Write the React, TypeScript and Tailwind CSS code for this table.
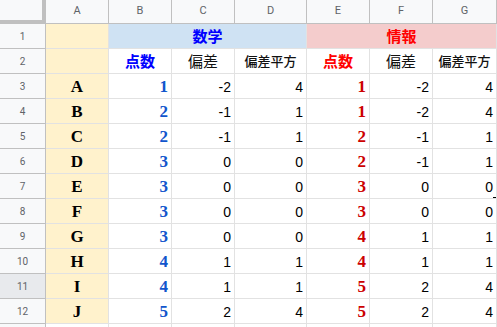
import React from 'react';

type Row = [string, number, number, number, number, number, number];

const rows: Row[] = [
  ['A', 1, -2, 4, 1, -2, 4],
  ['B', 2, -1, 1, 1, -2, 4],
  ['C', 2, -1, 1, 2, -1, 1],
  ['D', 3, 0, 0, 2, -1, 1],
  ['E', 3, 0, 0, 3, 0, 0],
  ['F', 3, 0, 0, 3, 0, 0],
  ['G', 3, 0, 0, 4, 1, 1],
  ['H', 4, 1, 1, 4, 1, 1],
  ['I', 4, 1, 1, 5, 2, 4],
  ['J', 5, 2, 4, 5, 2, 4],
];

const colHead =
  'flex items-center justify-center bg-[#f8f9fa] border-r border-b border-[#c0c0c0] text-[11px] text-[#5f6368] font-["Roboto",sans-serif]';
const rowHead =
  'flex items-center justify-center border-r border-b border-[#c0c0c0] text-[10px] text-[#5f6368] font-["Roboto",sans-serif]';
const cell = 'flex items-center border-r border-b border-[#e2e2e2] overflow-hidden';
const jp = 'font-["Noto_Sans_CJK_JP",sans-serif]';
const plain = `${cell} justify-end pr-[3px] pt-[2px] text-[14px] text-black font-["Liberation_Sans",Arial,sans-serif]`;
const serifNum = 'justify-end pr-[3px] pt-[2px] text-[17px] font-bold font-["Liberation_Serif",serif]';

export default function App() {
  return (
    <div className="w-[497px] h-[327px] overflow-hidden bg-white">
      <div className="grid grid-cols-[46px_63px_63px_63px_72px_63px_63px_64px] grid-rows-[24px_repeat(12,25px)_25px]">
        {/* column headers */}
        <div className="bg-[#f8f9fa] border-r-4 border-b-4 border-[#c0c0c0]" />
        {['A', 'B', 'C', 'D', 'E', 'F', 'G'].map(c => (
          <div key={c} className={colHead}>
            {c}
          </div>
        ))}

        {/* row 1 */}
        <div className={`${rowHead} bg-[#f8f9fa]`}>1</div>
        <div className={`${cell} bg-[#fff2cc]`} />
        <div className={`${cell} col-span-3 justify-center bg-[#cfe2f3] text-[15px] font-bold text-[#0000ff] ${jp}`}>
          数学
        </div>
        <div className={`${cell} col-span-3 justify-center bg-[#f4cccc] text-[15px] font-bold text-[#ff0000] ${jp}`}>
          情報
        </div>

        {/* row 2 */}
        <div className={`${rowHead} bg-[#f8f9fa]`}>2</div>
        <div className={`${cell} bg-[#fff2cc]`} />
        <div className={`${cell} justify-center text-[15px] font-bold text-[#0000ff] ${jp}`}>点数</div>
        <div className={`${cell} justify-center text-[15px] text-[#111] ${jp}`}>偏差</div>
        <div className={`${cell} justify-center text-[13px] font-medium text-[#111] ${jp}`}>偏差平方</div>
        <div className={`${cell} justify-center text-[15px] font-bold text-[#ff0000] ${jp}`}>点数</div>
        <div className={`${cell} justify-center text-[15px] text-[#111] ${jp}`}>偏差</div>
        <div className={`${cell} justify-center text-[13px] font-medium text-[#111] ${jp}`}>偏差平方</div>

        {/* data */}
        {rows.map(([name, a, b, c, d, e, f], i) => (
          <React.Fragment key={name}>
            <div className={`${rowHead} ${i === 8 ? 'bg-[#e8eaed]' : 'bg-[#f8f9fa]'}`}>{i + 3}</div>
            <div className={`${cell} justify-center pt-[2px] bg-[#fff2cc] text-[17px] font-bold text-black font-["Liberation_Serif",serif]`}>
              {name}
            </div>
            <div className={`${cell} ${serifNum} text-[#1155cc]`}>{a}</div>
            <div className={plain}>{b}</div>
            <div className={plain}>{c}</div>
            <div className={`${cell} ${serifNum} text-[#cc0000]`}>{d}</div>
            <div className={plain}>{e}</div>
            <div className={`${plain} relative`}>
              {f}
              {i === 4 && <span className="absolute right-0 bottom-0 w-[3px] h-px bg-black" />}
            </div>
          </React.Fragment>
        ))}

        {/* row 13 (only its top edge is visible) */}
        <div className={`${rowHead} bg-[#f8f9fa]`} />
        {[0, 1, 2, 3, 4, 5, 6].map(k => (
          <div key={k} className={cell} />
        ))}
      </div>
    </div>
  );
}
